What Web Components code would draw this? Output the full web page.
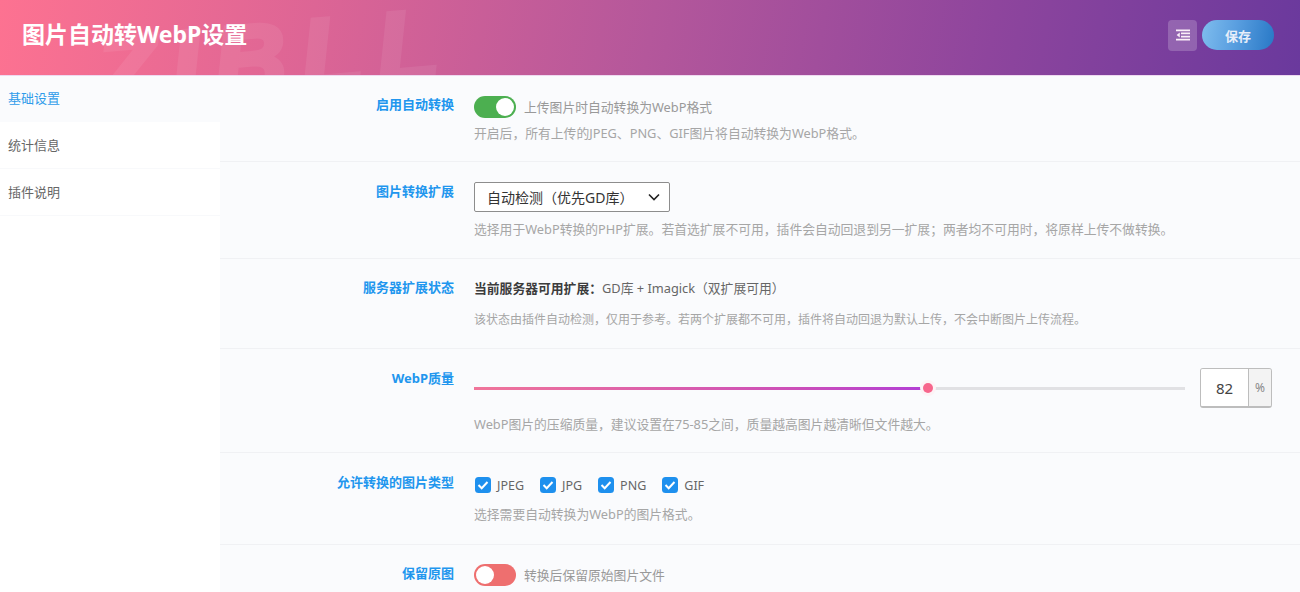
<!DOCTYPE html>
<html lang="zh">
<head>
<meta charset="utf-8">
<title>图片自动转WebP设置</title>
<style>
    html, body {
        margin: 0;
        height: 100%;
        overflow: hidden;
        background: #fff;
        font-family: "Noto Sans", "Noto Sans CJK SC", sans-serif;
    }
</style>
</head>
<body>
<zb-panel>
    <zb-header slot="header" title="图片自动转WebP设置"></zb-header>
    <zb-nav slot="nav">
        <zb-nav-item active>基础设置</zb-nav-item>
        <zb-nav-item>统计信息</zb-nav-item>
        <zb-nav-item>插件说明</zb-nav-item>
    </zb-nav>

    <zb-row label="启用自动转换" height="86" nudge="-1" desc="开启后，所有上传的JPEG、PNG、GIF图片将自动转换为WebP格式。" gap="6">
        <zb-switch on text="上传图片时自动转换为WebP格式"></zb-switch>
    </zb-row>
    <zb-row label="图片转换扩展" height="97" desc="选择用于WebP转换的PHP扩展。若首选扩展不可用，插件会自动回退到另一扩展；两者均不可用时，将原样上传不做转换。" gap="8">
        <zb-select value="自动检测（优先GD库）"></zb-select>
    </zb-row>
    <zb-row label="服务器扩展状态" height="90" pad="19" size="12" desc="该状态由插件自动检测，仅用于参考。若两个扩展都不可用，插件将自动回退为默认上传，不会中断图片上传流程。" gap="13">
        <zb-status name="当前服务器可用扩展：" value="GD库 + Imagick（双扩展可用）"></zb-status>
    </zb-row>
    <zb-row label="WebP质量" height="104" desc="WebP图片的压缩质量，建议设置在75-85之间，质量越高图片越清晰但文件越大。" gap="7">
        <zb-slider value="82" unit="%"></zb-slider>
    </zb-row>
    <zb-row label="允许转换的图片类型" height="92" desc="选择需要自动转换为WebP的图片格式。" gap="8">
        <zb-checks>
            <zb-check>JPEG</zb-check>
            <zb-check>JPG</zb-check>
            <zb-check>PNG</zb-check>
            <zb-check>GIF</zb-check>
        </zb-checks>
    </zb-row>
    <zb-row label="保留原图" height="60" pad="19">
        <zb-switch text="转换后保留原始图片文件"></zb-switch>
    </zb-row>
</zb-panel>

<script>
class ZbPanel extends HTMLElement {
    constructor() {
        super()
        this.attachShadow({ mode: 'open' })
    }

    connectedCallback() {
        this.shadowRoot.innerHTML = `
            <style>
                :host {
                    display: flex;
                    flex-direction: column;
                    height: 100vh;
                    overflow: hidden;
                }

                .body {
                    display: flex;
                    flex: 1;
                    min-height: 0;
                }

                .main {
                    flex: 1;
                    min-width: 0;
                    background: #fafbfd;
                }
            </style>
            <slot name="header"></slot>
            <div class="body">
                <slot name="nav"></slot>
                <div class="main"><slot></slot></div>
            </div>
        `
    }
}

class ZbHeader extends HTMLElement {
    constructor() {
        super()
        this.attachShadow({ mode: 'open' })
    }

    connectedCallback() {
        this.shadowRoot.innerHTML = `
            <style>
                :host {
                    display: flex;
                    flex: none;
                    align-items: center;
                    justify-content: space-between;
                    position: relative;
                    overflow: hidden;
                    height: 76px;
                    padding: 0 26px 0 22px;
                    box-sizing: border-box;
                    background: linear-gradient(100deg, #fd7291 0%, #dd6595 24%, #b4579b 50%, #8e459d 76%, #6a399d 100%);
                    border-bottom: 1px solid #eed9f0;
                }

                h1 {
                    margin: 0 0 7px;
                    font-size: 23px;
                    line-height: 32px;
                    font-weight: 700;
                    color: #fff;
                    position: relative;
                }

                .mark {
                    position: absolute;
                    left: 100px;
                    bottom: -48px;
                    font: italic 700 100px/1 "Liberation Sans", sans-serif;
                    letter-spacing: 15px;
                    color: #fff;
                    -webkit-text-stroke: 5px #fff;
                    opacity: 0.07;
                    white-space: nowrap;
                    transform: rotate(-5deg);
                    transform-origin: left bottom;
                }

                .actions {
                    display: flex;
                    align-items: center;
                    gap: 5px;
                    position: relative;
                    margin-bottom: 5px;
                }

                .icon {
                    display: flex;
                    align-items: center;
                    justify-content: center;
                    width: 29px;
                    height: 31px;
                    border-radius: 4px;
                    background: rgba(255, 255, 255, 0.2);
                }

                .save {
                    display: flex;
                    align-items: center;
                    justify-content: center;
                    width: 72px;
                    height: 30px;
                    border-radius: 15px;
                    background: linear-gradient(100deg, #7fbdee 0%, #5a9fe0 45%, #2878c6 100%);
                    color: #e6eefa;
                    font-size: 13px;
                    font-weight: 700;
                }
            </style>
            <div class="mark">ZIBLL</div>
            <h1>${this.getAttribute('title')}</h1>
            <div class="actions">
                <div class="icon">
                    <svg width="14" height="12" viewBox="0 0 14 12">
                        <path fill="#fbeef8" d="M0 .500h14v1.700H0zM5 3.600h9v1.600H5zM5 6.800h9v1.600H5zM0 9.800h14v1.700H0zM3.800 3.400v5.200L.600 6z"/>
                    </svg>
                </div>
                <div class="save">保存</div>
            </div>
        `
    }
}

class ZbNav extends HTMLElement {
    constructor() {
        super()
        this.attachShadow({ mode: 'open' })
    }

    connectedCallback() {
        this.shadowRoot.innerHTML = `
            <style>
                :host {
                    display: block;
                    flex: none;
                    width: 220px;
                    background: #fff;
                }
            </style>
            <slot></slot>
        `
    }
}

class ZbNavItem extends HTMLElement {
    constructor() {
        super()
        this.attachShadow({ mode: 'open' })
    }

    connectedCallback() {
        this.shadowRoot.innerHTML = `
            <style>
                :host {
                    display: flex;
                    align-items: center;
                    height: 47px;
                    padding: 0 8px 2px;
                    box-sizing: border-box;
                    font-size: 13px;
                    color: #666;
                    border-bottom: 1px solid #f8f9fb;
                }

                :host([active]) {
                    height: 46px;
                    padding-bottom: 4px;
                    color: #2f9bea;
                    background: #fafbfd;
                    border-bottom: 0;
                }
            </style>
            <slot></slot>
        `
    }
}

class ZbRow extends HTMLElement {
    constructor() {
        super()
        this.attachShadow({ mode: 'open' })
    }

    connectedCallback() {
        const desc = this.getAttribute('desc')
        const pad = this.getAttribute('pad') || 20
        const nudge = this.getAttribute('nudge') || 0
        const size = this.getAttribute('size') || 12.8
        this.shadowRoot.innerHTML = `
            <style>
                :host {
                    display: grid;
                    grid-template-columns: 234px 1fr;
                    column-gap: 20px;
                    align-items: start;
                    box-sizing: border-box;
                    height: ${this.getAttribute('height')}px;
                    padding: ${pad}px 28px 0 0;
                    border-bottom: 1px solid #f0f1f4;
                }

                .label {
                    margin-top: ${nudge}px;
                    text-align: right;
                    font-size: 13px;
                    line-height: 18px;
                    font-weight: 700;
                    color: #2196ee;
                }

                .desc {
                    margin-top: ${this.getAttribute('gap') || 0}px;
                    font-size: ${size}px;
                    line-height: 18px;
                    color: #a6a6a6;
                }
            </style>
            <div class="label">${this.getAttribute('label')}</div>
            <div>
                <slot></slot>
                ${desc ? `<div class="desc">${desc}</div>` : ''}
            </div>
        `
    }
}

class ZbSwitch extends HTMLElement {
    constructor() {
        super()
        this.attachShadow({ mode: 'open' })
    }

    connectedCallback() {
        this.shadowRoot.innerHTML = `
            <style>
                :host {
                    display: flex;
                    align-items: center;
                    gap: 8px;
                    font-size: 12.800px;
                    line-height: 22px;
                    color: #999;
                }

                .track {
                    display: flex;
                    align-items: center;
                    width: 42px;
                    height: 22px;
                    padding: 0 2px;
                    box-sizing: border-box;
                    border-radius: 11px;
                    background: #ee6f6f;
                }

                .knob {
                    width: 18px;
                    height: 18px;
                    border-radius: 50%;
                    background: #fff;
                }

                :host([on]) .track {
                    justify-content: flex-end;
                    background: #4caf50;
                }
            </style>
            <div class="track"><div class="knob"></div></div>
            <span>${this.getAttribute('text')}</span>
        `
    }
}

class ZbSelect extends HTMLElement {
    constructor() {
        super()
        this.attachShadow({ mode: 'open' })
    }

    connectedCallback() {
        this.shadowRoot.innerHTML = `
            <style>
                :host {
                    display: flex;
                    align-items: center;
                    justify-content: space-between;
                    width: 196px;
                    height: 30px;
                    padding: 0 9px 0 12px;
                    box-sizing: border-box;
                    background: #fff;
                    border: 1px solid #8d8d8d;
                    border-radius: 2px;
                    font-size: 14px;
                    color: #333;
                }
            </style>
            <span>${this.getAttribute('value')}</span>
            <svg width="12" height="8" viewBox="0 0 12 8">
                <path d="M1 1.500l5 5 5-5" fill="none" stroke="#222" stroke-width="1.600"/>
            </svg>
        `
    }
}

class ZbStatus extends HTMLElement {
    constructor() {
        super()
        this.attachShadow({ mode: 'open' })
    }

    connectedCallback() {
        this.shadowRoot.innerHTML = `
            <style>
                :host {
                    display: block;
                    font-size: 12.800px;
                    line-height: 20px;
                    color: #666;
                }

                b {
                    color: #3c3c3c;
                }
            </style>
            <b>${this.getAttribute('name')}</b>${this.getAttribute('value')}
        `
    }
}

class ZbSlider extends HTMLElement {
    constructor() {
        super()
        this.attachShadow({ mode: 'open' })
    }

    connectedCallback() {
        this.shadowRoot.innerHTML = `
            <style>
                :host {
                    display: flex;
                    align-items: center;
                    gap: 15px;
                    height: 40px;
                    margin-top: -1px;
                }

                .rail {
                    flex: 1;
                    position: relative;
                    height: 3px;
                    background: #e1e1e4;
                }

                .fill {
                    width: 63.800%;
                    height: 100%;
                    background: linear-gradient(90deg, #f0759a 0%, #cc4fb8 70%, #b23fd6 100%);
                }

                .thumb {
                    position: absolute;
                    left: 63.800%;
                    top: 50%;
                    width: 10px;
                    height: 10px;
                    margin: -5px 0 0 -5px;
                    border-radius: 50%;
                    background: #f7668c;
                    box-shadow: 0 0 0 3px #fdf3f6;
                }

                .box {
                    display: flex;
                    height: 40px;
                    width: 72px;
                    box-sizing: border-box;
                    border: 1px solid #bdbdbd;
                    border-bottom-width: 2px;
                    border-radius: 3px;
                    overflow: hidden;
                    font-size: 15px;
                    color: #444;
                }

                .num {
                    flex: 1;
                    display: flex;
                    align-items: center;
                    justify-content: center;
                    background: #fff;
                }

                .unit {
                    display: flex;
                    align-items: center;
                    justify-content: center;
                    width: 22px;
                    font-size: 12px;
                    color: #888;
                    background: #f3f3f3;
                    border-left: 1px solid #bdbdbd;
                }
            </style>
            <div class="rail"><div class="fill"></div><div class="thumb"></div></div>
            <div class="box">
                <div class="num">${this.getAttribute('value')}</div>
                <div class="unit">${this.getAttribute('unit')}</div>
            </div>
        `
    }
}

class ZbChecks extends HTMLElement {
    constructor() {
        super()
        this.attachShadow({ mode: 'open' })
    }

    connectedCallback() {
        this.shadowRoot.innerHTML = `
            <style>
                :host {
                    display: flex;
                    align-items: center;
                    gap: 16px;
                    height: 24px;
                    padding-left: 1px;
                }
            </style>
            <slot></slot>
        `
    }
}

class ZbCheck extends HTMLElement {
    constructor() {
        super()
        this.attachShadow({ mode: 'open' })
    }

    connectedCallback() {
        this.shadowRoot.innerHTML = `
            <style>
                :host {
                    display: flex;
                    align-items: center;
                    gap: 6px;
                    font-size: 12.500px;
                    color: #666;
                }

                svg {
                    display: block;
                }
            </style>
            <svg width="16" height="16" viewBox="0 0 16 16">
                <rect width="16" height="16" rx="3.500" fill="#1e90ee"/>
                <path d="M3.500 8l3.200 3.200L12.500 5" fill="none" stroke="#fff" stroke-width="2"/>
            </svg>
            <slot></slot>
        `
    }
}

customElements.define('zb-panel', ZbPanel)
customElements.define('zb-header', ZbHeader)
customElements.define('zb-nav', ZbNav)
customElements.define('zb-nav-item', ZbNavItem)
customElements.define('zb-row', ZbRow)
customElements.define('zb-switch', ZbSwitch)
customElements.define('zb-select', ZbSelect)
customElements.define('zb-status', ZbStatus)
customElements.define('zb-slider', ZbSlider)
customElements.define('zb-checks', ZbChecks)
customElements.define('zb-check', ZbCheck)
</script>
</body>
</html>
